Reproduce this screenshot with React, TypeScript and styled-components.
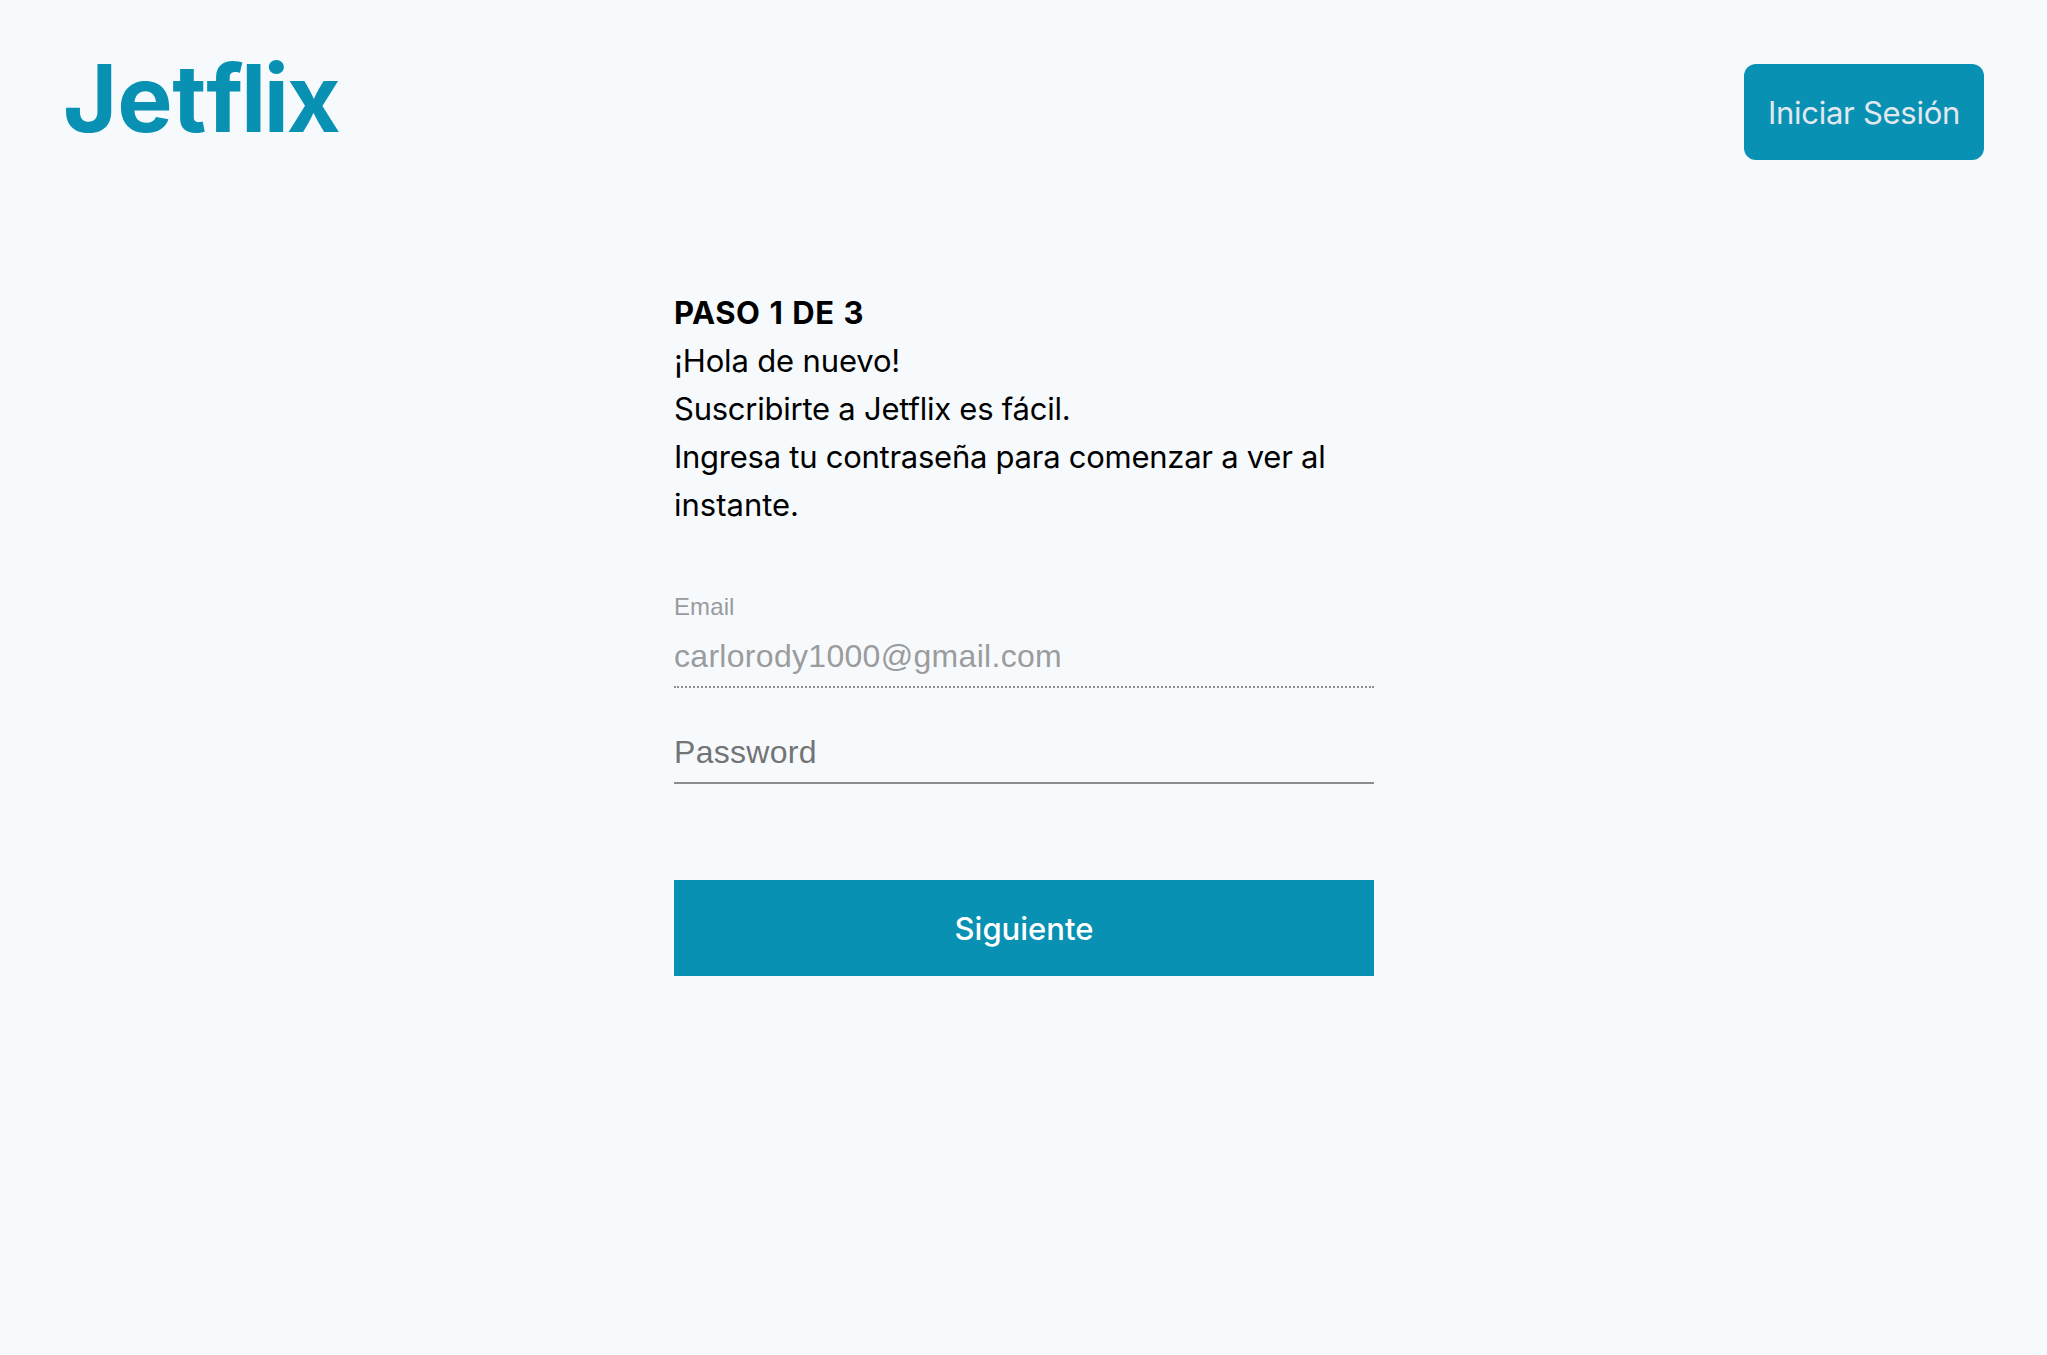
import React from 'react';
import styled, { createGlobalStyle } from 'styled-components';

const ui = `Inter, "Liberation Sans", sans-serif`;

const GlobalStyle = createGlobalStyle`
  * { box-sizing: border-box; }
  body { margin: 0; background: #f7fafd; font-family: ${ui}; color: #000; }
`;

const Page = styled.div`
  min-height: 1355px;
  background: #f7fafd;
`;

const Header = styled.header`
  display: flex;
  justify-content: space-between;
  align-items: flex-start;
  padding: 64px 63px 0 64px;
  height: 288px;
`;

const Logo = styled.h1`
  margin: -14px 0 0 -1px;
  font-size: 93px;
  line-height: 96px;
  font-weight: 700;
  letter-spacing: -0.2px;
  color: #0891b2;
`;

const Tight = styled.span`
  letter-spacing: -2.3px;
`;

const LoginButton = styled.button`
  width: 240px;
  height: 96px;
  padding: 2px 0 0;
  border: 0;
  border-radius: 12px;
  background: #0891b2;
  color: #e2e8f0;
  font: 400 31px/48px ${ui};
  letter-spacing: -0.28px;
  white-space: nowrap;
`;

const Form = styled.form`
  display: flex;
  flex-direction: column;
  width: 700px;
  margin: 0 673px 0 674px;
`;

const Copy = styled.div`
  height: 240px;
  padding-top: 1px;
`;

const Line = styled.p<{ $spacing: number }>`
  margin: 0;
  font-size: 31px;
  line-height: 48px;
  letter-spacing: ${(p) => p.$spacing}px;
  white-space: nowrap;
`;

const Step = styled(Line)`
  font-weight: 700;
  word-spacing: 1.2px;
`;

const Field = styled.label<{ $dotted?: boolean }>`
  display: flex;
  flex-direction: column;
  height: 96px;
  border-bottom: 2px ${(p) => (p.$dotted ? 'dotted' : 'solid')} #8b8d8f;
  font-family: "Liberation Sans", Arial, sans-serif;
  letter-spacing: 0.3px;
`;

const EmailField = styled(Field)`
  margin-top: 64px;
`;

const PasswordField = styled(Field)`
  padding-top: 30px;
`;

const Caption = styled.span`
  height: 32px;
  font-size: 24px;
  line-height: 30px;
  letter-spacing: 0.1px;
  color: #999b9d;
`;

const Value = styled.span<{ $muted?: boolean }>`
  font-size: 32px;
  line-height: 68px;
  color: ${(p) => (p.$muted ? '#9b9c9d' : '#737475')};
`;

const Submit = styled.button`
  height: 96px;
  margin-top: 96px;
  padding: 2px 0 0;
  border: 0;
  background: #0891b2;
  color: #fff;
  font: 500 31px/48px ${ui};
`;

export default function App() {
  return (
    <Page>
      <GlobalStyle />
      <Header>
        <Logo>Jet<Tight>flix</Tight></Logo>
        <LoginButton>Iniciar Sesión</LoginButton>
      </Header>
      <Form>
        <Copy>
          <Step $spacing={0.5}>PASO 1 DE 3</Step>
          <Line $spacing={-0.15}>¡Hola de nuevo!</Line>
          <Line $spacing={-0.24}>Suscribirte a Jetflix es fácil.</Line>
          <Line $spacing={-0.26}>Ingresa tu contraseña para comenzar a ver al</Line>
          <Line $spacing={0}>instante.</Line>
        </Copy>
        <EmailField $dotted>
          <Caption>Email</Caption>
          <Value $muted>carlorody1000@gmail.com</Value>
        </EmailField>
        <PasswordField>
          <Value>Password</Value>
        </PasswordField>
        <Submit type="button">Siguiente</Submit>
      </Form>
    </Page>
  );
}
